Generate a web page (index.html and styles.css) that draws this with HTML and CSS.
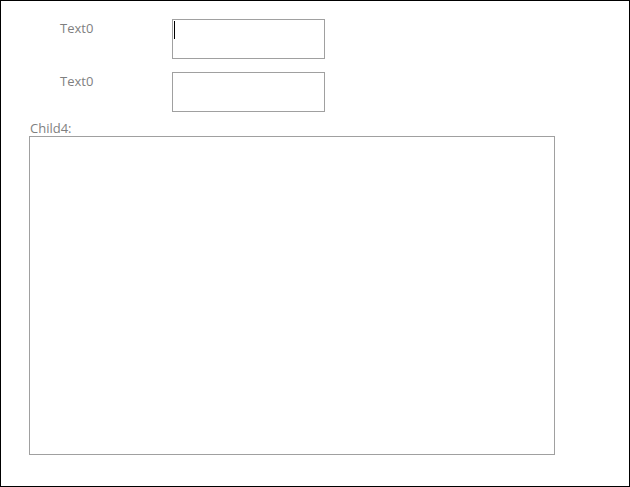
FILE: index.html
```html
<!DOCTYPE html>
<html>
<head>
<meta charset="utf-8">
<link rel="stylesheet" href="styles.css">
</head>
<body>
<div class="window">
  <div class="row">
    <span class="label">Text0</span>
    <div class="textbox"><span class="caret"></span></div>
  </div>
  <div class="row row2">
    <span class="label">Text0</span>
    <div class="textbox"></div>
  </div>
  <div class="child-label">Child4:</div>
  <div class="child-box"></div>
</div>
</body>
</html>
```
FILE: styles.css
```css
html, body {
  margin: 0;
  padding: 0;
  background: #fff;
}
.window {
  width: 630px;
  height: 487px;
  box-sizing: border-box;
  border: 1px solid #000;
  padding: 18px 0 0 28px;
  font-family: "Open Sans", "Noto Sans", sans-serif;
  font-size: 13px;
  color: #7f7f7f;
}
.row {
  display: flex;
  align-items: flex-start;
}
.row2 {
  margin-top: 13px;
}
.label {
  margin-left: 31px;
  width: 112px;
  line-height: 18px;
}
.textbox {
  width: 153px;
  height: 40px;
  box-sizing: border-box;
  border: 1px solid #a0a0a0;
  padding: 1px 0 0 1px;
}
.caret {
  display: block;
  width: 1px;
  height: 18px;
  background: #000;
}
.child-label {
  margin: 9px 0 0 1px;
  line-height: 15px;
  height: 15px;
}
.child-box {
  width: 526px;
  height: 319px;
  box-sizing: border-box;
  border: 1px solid #a0a0a0;
}
```
